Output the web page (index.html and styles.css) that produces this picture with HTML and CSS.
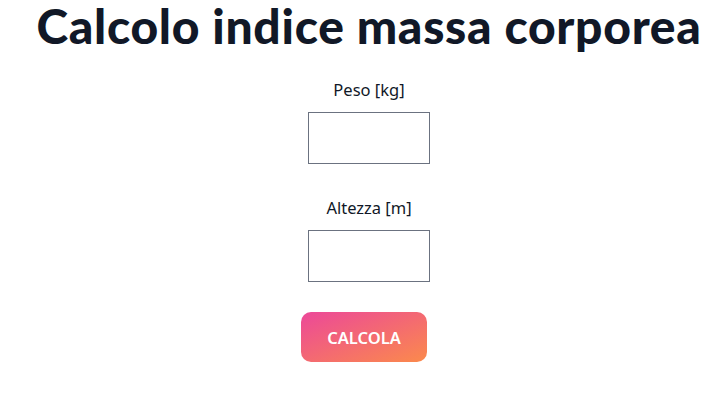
FILE: index.html
```html
<!DOCTYPE html>
<html lang="it">
<head>
<meta charset="utf-8">
<title>Calcolo indice massa corporea</title>
<link rel="stylesheet" href="styles.css">
</head>
<body>
<main class="page">
  <h1 class="title">Calcolo indice massa corporea</h1>
  <form class="form">
    <label class="field">
      <span class="label">Peso [kg]</span>
      <input class="input" type="text">
    </label>
    <label class="field">
      <span class="label">Altezza [m]</span>
      <input class="input" type="text">
    </label>
    <button class="button" type="button">CALCOLA</button>
  </form>
</main>
</body>
</html>
```
FILE: styles.css
```css
html, body {
  margin: 0;
  padding: 0;
  background: #ffffff;
}
body {
  font-family: "Noto Sans", "Open Sans", sans-serif;
  color: #111827;
}
.page {
  display: flex;
  flex-direction: column;
  align-items: center;
  padding-left: 20px;
}
.title {
  margin: 0;
  font-family: Lato, "Noto Sans", sans-serif;
  font-size: 48px;
  font-weight: 900;
  line-height: 52px;
  letter-spacing: 0.7px;
  white-space: nowrap;
  color: #111827;
}
.form {
  display: flex;
  flex-direction: column;
  align-items: center;
  margin-top: 27px;
}
.field {
  display: flex;
  flex-direction: column;
  align-items: center;
  gap: 11px;
  margin-bottom: 33px;
}
.label {
  font-size: 16.5px;
  line-height: 22px;
}
.input {
  box-sizing: border-box;
  width: 122px;
  height: 52px;
  border: 1px solid #6b7280;
  border-radius: 0;
  padding: 0;
  background: #fff;
}
.button {
  margin-top: -3px;
  margin-left: -10px;
  width: 126px;
  height: 50px;
  border: none;
  border-radius: 10px;
  background: linear-gradient(to bottom right, #ec4899, #fb8a4c);
  color: #fff;
  font-family: "Noto Sans", "Open Sans", sans-serif;
  font-size: 16.5px;
  font-weight: 600;
}
```
